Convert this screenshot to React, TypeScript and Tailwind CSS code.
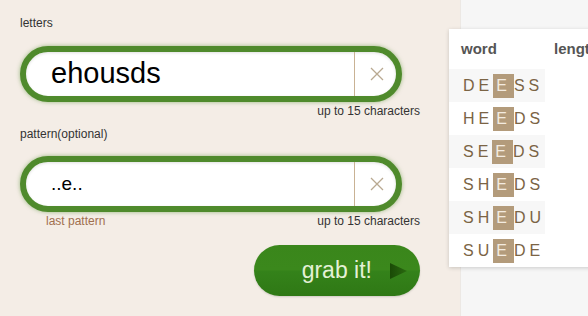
import React from "react";

const words = ["DEESS", "HEEDS", "SEEDS", "SHEDS", "SHEDU", "SUEDE"];

function ClearIcon() {
  return (
    <svg width="14" height="14" viewBox="0 0 14 14" className="block">
      <path d="M1 1 L13 13 M13 1 L1 13" stroke="#b9a991" strokeWidth="1.3" fill="none" />
    </svg>
  );
}

function Pill({ value, big }: { value: string; big?: boolean }) {
  return (
    <div className="w-[382px] h-[56px] rounded-full border-[6px] border-[#4f8a2c] bg-white flex shadow-[0_0_4px_rgba(79,138,44,0.55),inset_0_1px_3px_rgba(0,0,0,0.12)]">
      <div
        className={`flex-1 flex items-center pl-[25px] text-black ${
          big ? "text-[29px]" : "text-[19px]"
        }`}
      >
        {value}
      </div>
      <div className="w-[42px] border-l border-[#c9b294] flex items-center justify-center pl-[2px]">
        <ClearIcon />
      </div>
    </div>
  );
}

function Word({ w }: { w: string }) {
  return (
    <span className="whitespace-nowrap text-[16px] tracking-[4px] text-[#7b6445] leading-[24px]">
      {w.split("").map((c, i) =>
        i === 2 ? (
          <span key={i} className="inline-block bg-[#b39b7b] text-[#f3ebe0] px-[3px]">
            {c}
          </span>
        ) : (
          <span key={i}>{c}</span>
        )
      )}
    </span>
  );
}

export default function App() {
  return (
    <div className="flex w-[588px] h-[316px] overflow-hidden font-['Liberation_Sans',Arial,sans-serif]">
      {/* form */}
      <div className="w-[460px] shrink-0 bg-[#f4ede6] pl-5 pt-[16px]">
        <div className="text-[12px] leading-[15px] text-[#333]">letters</div>
        <div className="mt-[15px]">
          <Pill value="ehousds" big />
        </div>
        <div className="w-[400px] text-right text-[12px] leading-[15px] text-[#333] mt-[2px]">
          up to 15 characters
        </div>
        <div className="text-[12px] leading-[15px] text-[#333] mt-[8px]">pattern(optional)</div>
        <div className="mt-[14px]">
          <Pill value="..e.." />
        </div>
        <div className="w-[400px] flex justify-between text-[12px] leading-[15px] mt-[2px]">
          <span className="pl-[26px] text-[#a0704f]">last pattern</span>
          <span className="text-[#333]">up to 15 characters</span>
        </div>
        <div className="w-[400px] flex justify-end mt-[16px]">
          <button className="w-[166px] h-[51px] rounded-full bg-[linear-gradient(#3a861b_0%,#3b881c_48%,#34821a_52%,#2f7815_100%)] flex items-center justify-end pr-[13px] gap-[18px] shadow-[0_1px_2px_rgba(0,0,0,0.15)]">
            <span className="text-[23px] text-[#e4f1d6]">grab it!</span>
            <svg width="17" height="16" viewBox="0 0 17 16" className="block">
              <defs>
                <linearGradient id="tri" x1="0" y1="0" x2="1" y2="0">
                  <stop offset="0" stopColor="#1a4a06" />
                  <stop offset="1" stopColor="#2a6a10" />
                </linearGradient>
              </defs>
              <path d="M0 0 L17 8 L0 16 Z" fill="url(#tri)" />
            </svg>
          </button>
        </div>
      </div>

      {/* results */}
      <div className="flex-1 bg-[#f6f6f6] border-l border-[#ece8e4] pt-[29px]">
        <div className="-ml-[12px] w-[200px] bg-white shadow-[0_1px_4px_rgba(0,0,0,0.18)]">
          <div className="h-[40px] flex items-center text-[15px] font-bold text-[#555]">
            <div className="w-[96px] shrink-0 pl-[12px]">word</div>
            <div className="pl-[9px] whitespace-nowrap">length</div>
          </div>
          {words.map((w, i) => (
            <div key={w} className="h-[33px] flex">
              <div
                className={`w-[96px] shrink-0 pl-[14px] flex items-center ${
                  i % 2 === 0 ? "bg-[#f7f7f7]" : "bg-white"
                }`}
              >
                <Word w={w} />
              </div>
              <div className="flex-1" />
            </div>
          ))}
        </div>
      </div>
    </div>
  );
}
